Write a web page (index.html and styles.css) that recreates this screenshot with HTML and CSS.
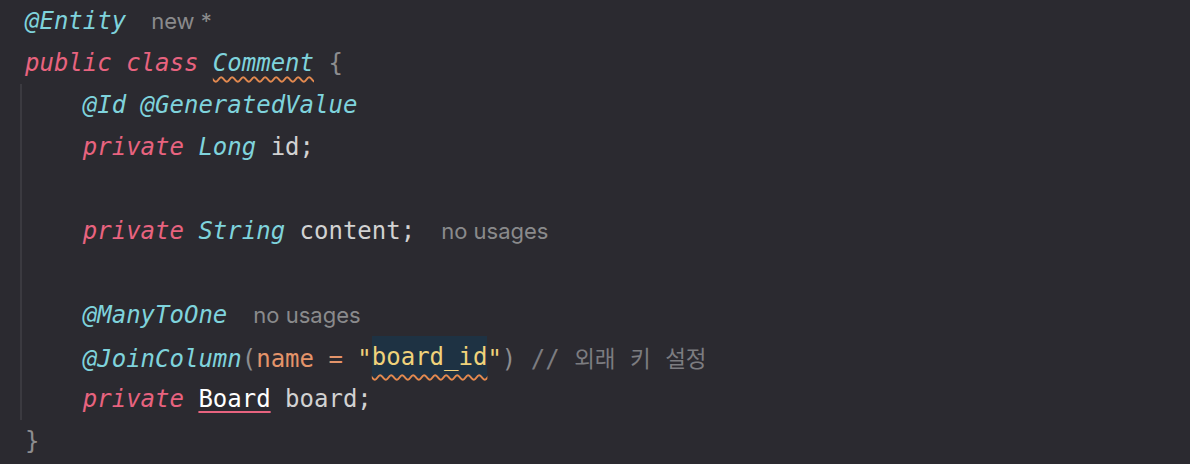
FILE: index.html
```html
<!DOCTYPE html>
<html>
<head>
<meta charset="utf-8">
<link rel="stylesheet" href="styles.css">
</head>
<body>
<div class="editor">
  <div class="line"><span class="ann">@Entity</span><span class="hint hint-new">new *</span></div>
  <div class="line"><span class="kw">public class</span> <span class="type wavy">Comment</span> <span class="brace">{</span></div>
  <div class="block">
    <div class="line">    <span class="ann">@Id @GeneratedValue</span></div>
    <div class="line">    <span class="kw">private</span> <span class="type">Long</span> id;</div>
    <div class="line"> </div>
    <div class="line">    <span class="kw">private</span> <span class="type">String</span> content;<span class="hint">no usages</span></div>
    <div class="line"> </div>
    <div class="line">    <span class="ann">@ManyToOne</span><span class="hint">no usages</span></div>
    <div class="line">    <span class="ann">@JoinColumn</span><span class="paren">(</span><span class="param">name = </span><span class="str">"<span class="strhl">board_id</span>"</span><span class="paren">)</span> <span class="comment">// <span class="ko">외래</span> <span class="ko">키</span> <span class="ko">설정</span></span></div>
    <div class="line">    <span class="kw">private</span> <span class="ref">Board</span> board;</div>
  </div>
  <div class="line"><span class="brace">}</span></div>
</div>
</body>
</html>
```
FILE: styles.css
```css
html, body {
  margin: 0;
  padding: 0;
  background: #2b2a30;
  height: 100%;
}
.editor {
  font-family: "DejaVu Sans Mono", "Noto Sans CJK KR", monospace;
  font-size: 24px;
  color: #d2d2d2;
  padding-left: 25px;
}
.line {
  height: 42px;
  line-height: 42px;
  white-space: pre;
}
.block {
  margin-left: -5px;
  padding-left: 3px;
  border-left: 2px solid #3b3a40;
}
.ann {
  color: #7fd3dc;
  font-style: italic;
}
.kw {
  color: #e8637f;
  font-style: italic;
}
.type {
  color: #7fd3dc;
  font-style: italic;
}
.wavy {
  text-decoration: underline wavy #e3894f;
  text-decoration-thickness: 1.5px;
  text-decoration-skip-ink: none;
  text-underline-offset: 5px;
}
.brace, .paren {
  color: #8d8d8f;
}
.param {
  color: #e4946a;
}
.str {
  color: #f0d27a;
}
.strhl {
  display: inline-block;
  height: 42px;
  line-height: 42px;
  vertical-align: top;
  background: #1e3243;
  text-decoration: underline wavy #e3894f;
  text-decoration-thickness: 1.5px;
  text-decoration-skip-ink: none;
  text-underline-offset: 9px;
}
.comment {
  color: #7c7c80;
}
.ko {
  font-family: "Noto Sans CJK KR", sans-serif;
  font-size: 22.5px;
}
.ref {
  color: #ffffff;
  text-decoration: underline #e8637f;
  text-decoration-thickness: 2px;
  text-underline-offset: 4px;
}
.hint {
  font-family: "Inter", "Noto Sans", sans-serif;
  font-size: 22px;
  color: #8a8a8c;
  margin-left: 26px;
}
.hint-new {
  margin-left: 25px;
}
```
